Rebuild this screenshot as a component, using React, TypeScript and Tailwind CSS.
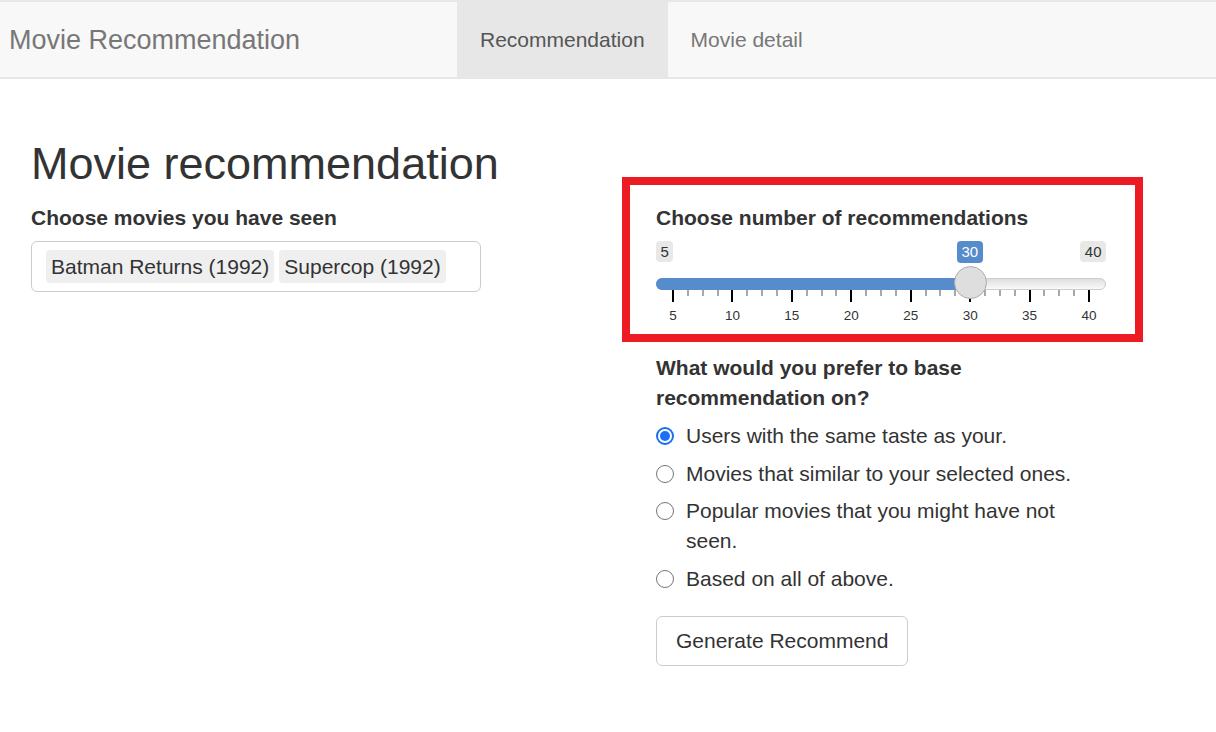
import React from "react"

const ticks = Array.from({ length: 29 }, (_, j) => j)

function Slider() {
  return (
    <div className="relative mt-[8px] h-[84px] w-[450px]">
      <span className="absolute left-0 top-0 rounded-[4px] bg-[#e8e8e8] px-[4.5px] text-[15px] leading-[21px] text-[#333]">5</span>
      <span className="absolute left-[301px] top-0 rounded-[4px] bg-[#568bcc] px-[4.5px] text-[15px] leading-[22px] text-white">30</span>
      <span className="absolute right-0 top-0 rounded-[4px] bg-[#e8e8e8] px-[4.5px] text-[15px] leading-[21px] text-[#333]">40</span>

      <div className="absolute left-0 right-0 top-[37px] h-[12px] rounded-full border border-[#cccccc] bg-[linear-gradient(to_bottom,#dedede,#fafafa)]" />
      <div className="absolute left-0 top-[37px] h-[12px] w-[314px] rounded-l-full bg-[#568bcc]" />

      {ticks.map((j) => {
        const x = 17 + (j * 416) / 28
        const major = j % 4 === 0
        return (
          <React.Fragment key={j}>
            <div
              className={major ? "absolute top-[49px] h-[12px] w-[2px] bg-black" : "absolute top-[49px] h-[6px] w-[2px] bg-[#a8a8a8]"}
              style={{ left: x - 1 }}
            />
            {major && (
              <span
                className="absolute top-[67px] -translate-x-1/2 text-[13.5px] leading-[16px] text-[#333]"
                style={{ left: x }}
              >
                {5 + (j / 4) * 5}
              </span>
            )}
          </React.Fragment>
        )
      })}

      <div className="absolute left-[298px] top-[25px] h-[33px] w-[33px] rounded-full border border-[#ababab] bg-[#dedede]" />
    </div>
  )
}

function Radio({ label, checked }: { label: string; checked?: boolean }) {
  return (
    <div className="flex items-start">
      <span className="flex h-[30px] w-[30px] flex-none items-center">
        {checked ? (
          <span className="flex h-[18px] w-[18px] items-center justify-center rounded-full border-[2px] border-[#1a6ff5] bg-white">
            <span className="h-[10px] w-[10px] rounded-full bg-[#1a6ff5]" />
          </span>
        ) : (
          <span className="h-[18px] w-[18px] rounded-full border-[1.5px] border-[#767676] bg-white" />
        )}
      </span>
      <span className="w-[420px] text-[21px] leading-[30px]">{label}</span>
    </div>
  )
}

export default function App() {
  return (
    <div className="min-h-[732px] bg-white font-['Liberation_Sans',Arial,sans-serif] text-[#333]">
      <nav className="flex h-[79px] border-y-2 border-[#e7e7e7] bg-[#f8f8f8]">
        <div className="flex w-[457px] flex-none items-center pl-[9px] text-[27px] leading-[30px] text-[#777]">
          Movie Recommendation
        </div>
        <div className="flex items-center bg-[#e7e7e7] px-[23px] text-[21px] leading-[30px] text-[#555]">Recommendation</div>
        <div className="flex items-center px-[23px] text-[21px] leading-[30px] text-[#777]">Movie detail</div>
      </nav>

      <main className="relative grid grid-cols-[656px_1fr] pt-[60px]">
        <div className="pl-[31px]">
          <h2 className="text-[45px] font-normal leading-[50px]">Movie recommendation</h2>
          <div className="mt-[14px] text-[21px] font-bold leading-[30px]">Choose movies you have seen</div>
          <div className="mt-[8px] flex h-[51px] w-[450px] items-start gap-[5px] rounded-[6px] border border-[#cccccc] pl-[14px] pt-[8px]">
            <span className="rounded-[4px] bg-[#efefef] px-[5px] text-[21px] leading-[33px]">Batman Returns (1992)</span>
            <span className="rounded-[4px] bg-[#efefef] px-[5px] text-[21px] leading-[33px]">Supercop (1992)</span>
          </div>
        </div>

        <div className="pt-[64px]">
          <div className="text-[21px] font-bold leading-[30px]">Choose number of recommendations</div>
          <Slider />

          <div className="mt-[28px] w-[450px] text-[21px] font-bold leading-[30px]">
            What would you prefer to base recommendation on?
          </div>
          <div className="mt-[8px] flex flex-col gap-[7.5px]">
            <Radio label="Users with the same taste as your." checked />
            <Radio label="Movies that similar to your selected ones." />
            <Radio label="Popular movies that you might have not seen." />
            <Radio label="Based on all of above." />
          </div>

          <button className="mt-[22.5px] h-[50px] rounded-[6px] border border-[#cccccc] bg-white px-[19px] text-[21px] leading-[30px] text-[#333]">
            Generate Recommend
          </button>
        </div>

        <div className="pointer-events-none absolute left-[622px] top-[98px] h-[165px] w-[521px] border-[8px] border-[#ed1c24]" />
      </main>
    </div>
  )
}
